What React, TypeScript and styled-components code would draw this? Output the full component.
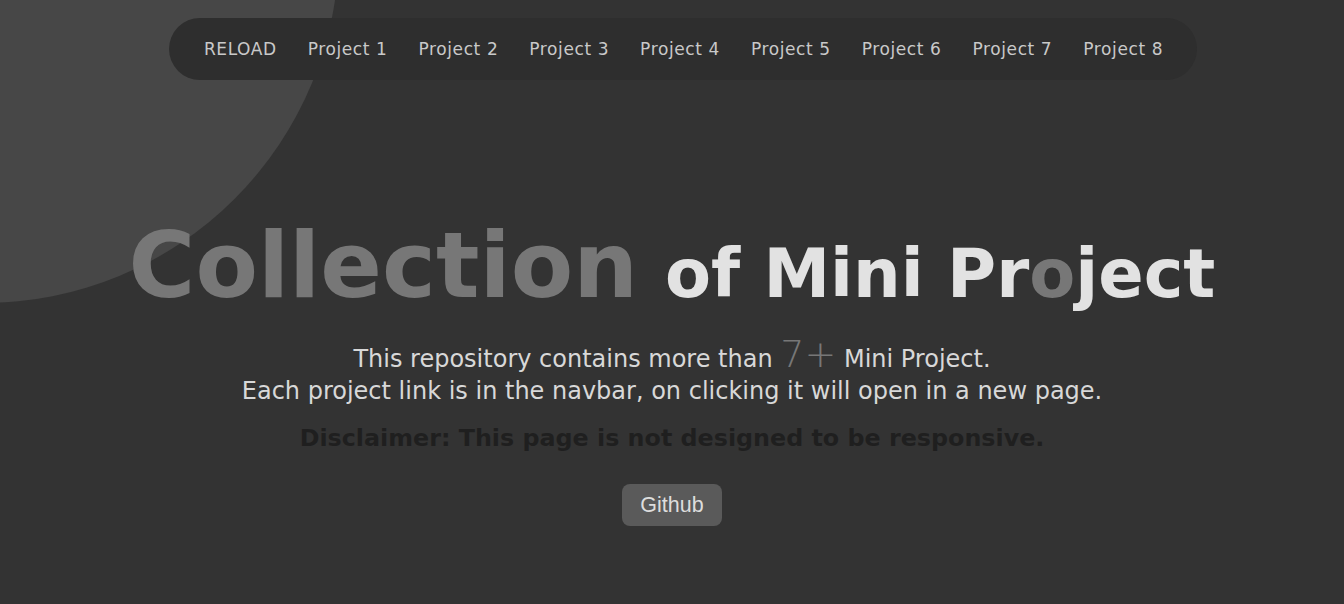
import styled, { createGlobalStyle } from 'styled-components';

const GlobalStyle = createGlobalStyle`
  html,
  body {
    margin: 0;
    padding: 0;
    background: #333333;
    font-family: 'DejaVu Sans', Verdana, sans-serif;
  }
`;

const Page = styled.div`
  position: relative;
  overflow: hidden;
  width: 100%;
  height: 604px;
  background: #333333;
`;

// decorative blob behind the top-left corner
const Blob = styled.div`
  position: absolute;
  left: -373px;
  top: -409px;
  width: 712px;
  height: 712px;
  border-radius: 50%;
  background: #474747;
`;

const Content = styled.div`
  position: relative;
  display: flex;
  flex-direction: column;
  align-items: center;
`;

const NavWrap = styled.div`
  display: flex;
  justify-content: center;
  width: 100%;
  padding: 18px 0 0 22px;
  box-sizing: border-box;
`;

const Nav = styled.nav`
  display: flex;
  align-items: center;
  gap: 31px;
  height: 62px;
  padding: 0 34px 0 35px;
  border-radius: 31px;
  background: #2e2e2e;
`;

const NavLink = styled.a`
  color: #c9c9c9;
  font-size: 17px;
  letter-spacing: 0.6px;
  text-decoration: none;
  white-space: nowrap;
`;

const Title = styled.h1`
  display: flex;
  align-items: baseline;
  gap: 27px;
  margin: 140px 0 0;
  font-weight: bold;
  line-height: 1;
`;

const Big = styled.span`
  color: #777777;
  font-size: 91px;
`;

const Small = styled.span`
  color: #e2e2e2;
  font-size: 67px;
`;

const Dim = styled.span`
  color: #777777;
`;

const Intro = styled.p`
  margin: 27px 0 0;
  color: #d8d8d8;
  font-size: 24px;
  line-height: 32px;
  text-align: center;
`;

const Count = styled.span`
  color: #777777;
  font-size: 38px;
  font-weight: 200;
`;

const Disclaimer = styled.p`
  margin: 17px 0 0;
  color: #1f1f1f;
  font-size: 23.8px;
  font-weight: bold;
`;

const Button = styled.a`
  display: flex;
  align-items: center;
  justify-content: center;
  width: 100px;
  height: 42px;
  margin-top: 32px;
  border-radius: 8px;
  background: #5a5a5a;
  color: #dddddd;
  font-family: 'Liberation Sans', Arial, sans-serif;
  font-size: 21.5px;
  text-decoration: none;
`;

const links = ['RELOAD', 'Project 1', 'Project 2', 'Project 3', 'Project 4', 'Project 5', 'Project 6', 'Project 7', 'Project 8'];

export default function App() {
  return (
    <Page>
      <GlobalStyle />
      <Blob />
      <Content>
        <NavWrap>
          <Nav>
            {links.map((l) => (
              <NavLink key={l} href="#">
                {l}
              </NavLink>
            ))}
          </Nav>
        </NavWrap>
        <Title>
          <Big>Collection</Big>
          <Small>
            of Mini Pr<Dim>o</Dim>ject
          </Small>
        </Title>
        <Intro>
          This repository contains more than <Count>7+</Count> Mini Project.
          <br />
          Each project link is in the navbar, on clicking it will open in a new page.
        </Intro>
        <Disclaimer>Disclaimer: This page is not designed to be responsive.</Disclaimer>
        <Button href="#">Github</Button>
      </Content>
    </Page>
  );
}
